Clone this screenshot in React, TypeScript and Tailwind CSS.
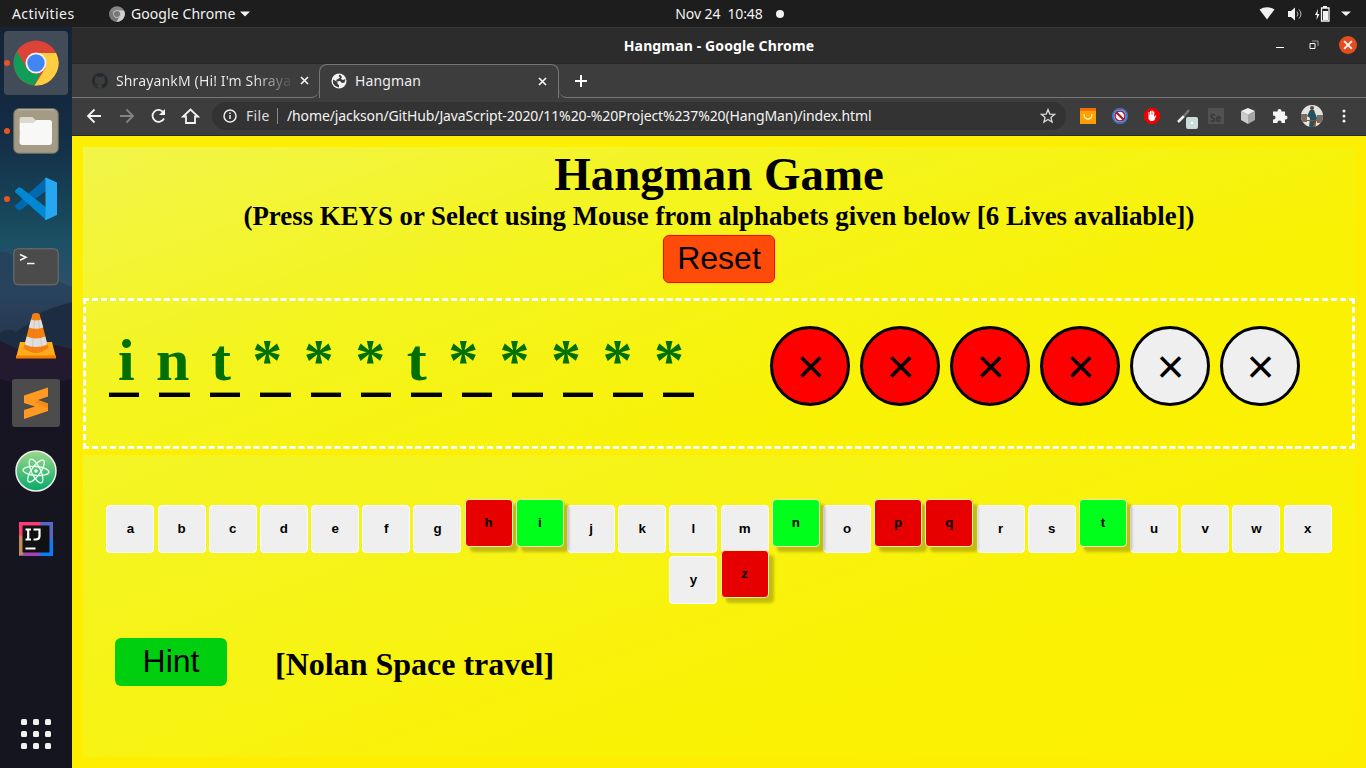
import React from 'react';

const revealed = ['i', 'n', 't', '*', '*', '*', 't', '*', '*', '*', '*', '*'];
const letters = 'abcdefghijklmnopqrstuvwxyz'.split('');
const wrong = 'hpqz';
const right = 'int';

function Chrome({ size = 46, grey = false }: { size?: number; grey?: boolean }) {
  return (
    <svg width={size} height={size} viewBox="0 0 46 46">
      <circle cx="23" cy="23" r="22.5" fill={grey ? '#858585' : '#db4437'} />
      <path d="M4 11.5 13.6 28A11 11 0 0 0 27.5 33L21.5 45.5A22.5 22.5 0 0 1 4 11.5Z" fill={grey ? '#777' : '#0f9d58'} />
      <path d="M23 13H43.1A22.5 22.5 0 0 1 21.5 45.5L32.2 28.5A11 11 0 0 0 23 13Z" fill={grey ? '#d0d0d0' : '#ffcd40'} />
      <circle cx="23" cy="23" r="10.5" fill={grey ? '#ccc' : '#f1f1f1'} />
      <circle cx="23" cy="23" r="8.7" fill={grey ? '#777' : '#4285f4'} />
    </svg>
  );
}

function FilesIcon() {
  return (
    <svg width="46" height="46" viewBox="0 0 46 46">
      <rect x=".8" y=".8" width="44.4" height="44.4" rx="5" fill="#a39b86" stroke="#7a7466" />
      <path d="M5 1.8h36" stroke="#c6c0b0" />
      <path d="M6.5 12V11q0-2 2-2h11l3 3H36v10H6.5z" fill="#ddd9cd" />
      <path d="M7 15h13l4-3h12.5q2.5 0 2.5 2.5V34q0 3-3 3H9.5q-3 0-3-3z" fill="#f8f8f6" />
    </svg>
  );
}

function CodeIcon() {
  return (
    <svg width="46" height="46" viewBox="0 0 46 46">
      <path d="M33 1.8 2.5 29.2Q1.5 30.5 2.5 31.5L5 33.8Q6.5 34.8 8 33.8L34 14Z" fill="#0069b0" />
      <path d="M8 11.8Q6.5 10.8 5 11.8L2.5 14Q1.5 15 2.5 16.5L33 44 34 32Z" fill="#0088d3" />
      <path d="M33 1.5 44 6.5V39L33 44Q31.5 44 32.5 41V4Q31.5 1.5 33 1.5Z" fill="#27a6f1" />
    </svg>
  );
}

function TerminalIcon() {
  return (
    <svg width="46" height="38" viewBox="0 0 46 38">
      <rect x=".8" y=".8" width="44.4" height="36" rx="4" fill="#4b4b4b" stroke="#727272" />
      <path d="m7 6.5 6 2.8-6 3M14 15.5h7.5" fill="none" stroke="#f4f4f4" strokeWidth="1.6" />
    </svg>
  );
}

function ConeIcon() {
  return (
    <svg width="42" height="48" viewBox="0 0 42 48">
      <path d="M5 31h32l4 16H1z" fill="#ffab1b" />
      <path d="M1 44.5h40v3H1z" fill="#f47c00" />
      <path d="M17.5 3q3.5-2 7 0l9 34q-12.5 10-25 0z" fill="#f58210" />
      <path d="M16 8.5q5 2 10 0l2.3 8q-7.3 2.5-14.5 0zM11.8 25.5q9.2 4 18.4 0l2.1 8q-11.3 5-22.6 0z" fill="#dedede" />
      <path d="m20 3-3 38M23 3l4 36" stroke="#b65c22" strokeOpacity=".16" />
    </svg>
  );
}

function SublimeIcon() {
  return (
    <svg width="48" height="48" viewBox="0 0 48 48">
      <rect width="48" height="48" rx="3" fill="#4c4c4c" />
      <path d="m12 16.5 24-8v9L26 21l10 3.5V32l-24 8v-9l11-3.5L12 24z" fill="#ff9921" />
      <path d="m26 21 10 3.5V29l-13-5z" fill="#e47d0b" fillOpacity=".45" />
    </svg>
  );
}

function AtomIcon() {
  return (
    <svg width="42" height="42" viewBox="0 0 42 42">
      <defs><linearGradient id="atom" x2="0" y2="1"><stop stopColor="#9bd88b" /><stop offset="1" stopColor="#08a96b" /></linearGradient></defs>
      <circle cx="21" cy="21" r="20" fill="url(#atom)" stroke="#eee" strokeWidth="1.5" />
      <g fill="none" stroke="#e9fff1" strokeWidth="1.3">
        <ellipse cx="21" cy="21" rx="13" ry="4.5" transform="rotate(5 21 21)" />
        <ellipse cx="21" cy="21" rx="13" ry="4.5" transform="rotate(65 21 21)" />
        <ellipse cx="21" cy="21" rx="13" ry="4.5" transform="rotate(125 21 21)" />
      </g>
      <circle cx="21" cy="21" r="1.7" fill="#fff" />
    </svg>
  );
}

function IntelliJIcon() {
  return (
    <svg width="36" height="36" viewBox="0 0 36 36">
      <path d="M1 1h34v34H1z" fill="#5866c6" />
      <path d="M1 1h22l-8 17L1 18z" fill="#fc3d72" />
      <path d="M1 14l8 4-4 16H1z" fill="#c58a56" />
      <path d="M3 35 12 28l12 7z" fill="#a442b1" />
      <path d="M35 18v17H22l5-12z" fill="#087cfa" />
      <path d="M4.5 4.5h27v27h-27z" fill="#111" />
      <path d="M7.5 8.5H13M10.2 8.5v10M7.5 18.5H13M15.5 8.5h6V15q0 3.5-4 3.500h-2" fill="none" stroke="#fff" strokeWidth="2.2" />
      <path d="M7.5 26.5h10v2h-10z" fill="#fff" />
    </svg>
  );
}

function DockItem({ children, running = false, active = false }: { children: React.ReactNode; running?: boolean; active?: boolean }) {
  return (
    <div className={`relative flex h-16 w-16 shrink-0 items-center justify-center rounded ${active ? 'bg-[#424c59]' : ''}`}>
      {running && <span className="absolute top-[29px] left-0 h-1.5 w-1.5 rounded-full bg-[#e95420]" />}
      {children}
    </div>
  );
}

function Dock() {
  return (
    <aside className="relative flex w-[72px] shrink-0 flex-col items-center gap-1 bg-[linear-gradient(180deg,#152334_0%,#142c44_14%,#17465a_25%,#1c5064_29%,#30506a_36%,#2b3c56_40%,#181522_53%,#151520_65%)] pt-1">
      <svg width="72" height="741" viewBox="0 0 72 741" className="absolute inset-0">
        <path d="M0 225q6-2 12 3l12 8 20 12 28 12v60H0z" fill="#273a55" fillOpacity=".6" />
        <path d="M0 306q8-6 16-1l12-8 14-12 10-4 20-6v80H0z" fill="#1c2d42" />
        <path d="M0 314l22 10 18 2 14-8 18 4v70H0z" fill="#241a30" />
        <path d="M0 352l30 8 42-8v50H0z" fill="#171523" />
      </svg>
      <DockItem active running><Chrome /></DockItem>
      <DockItem running><FilesIcon /></DockItem>
      <DockItem running><CodeIcon /></DockItem>
      <DockItem><TerminalIcon /></DockItem>
      <DockItem><ConeIcon /></DockItem>
      <DockItem><SublimeIcon /></DockItem>
      <DockItem><AtomIcon /></DockItem>
      <DockItem><IntelliJIcon /></DockItem>
      <div className="mt-auto mb-[19px] grid grid-cols-3 gap-1.5">
        {Array.from({ length: 9 }, (_, i) => <i key={i} className="h-1.5 w-1.5 rounded-[1.5px] bg-[#f0f0ed]" />)}
      </div>
    </aside>
  );
}

function SystemBar() {
  return (
    <header className="grid h-[27px] shrink-0 grid-cols-3 items-center bg-[#1d1d1d] text-[14px] leading-[26px] text-[#f2f2f2]">
      <div className="flex items-center pl-3">
        <span className="w-[97px] tracking-[0.42px]">Activities</span>
        <Chrome size={16} grey />
        <span className="ml-1.5 w-[105px] tracking-[0.08px]">Google Chrome</span>
        <svg width="11" height="6" viewBox="0 0 11 6" className="ml-1"><path d="M0 .5h10L5 5.5z" fill="#f2f2f2" /></svg>
      </div>
      <div className="flex items-center pl-[220px]">
        <span className="w-[89px] whitespace-pre tracking-[-0.1px]">Nov 24  10:48</span>
        <i className="ml-3 h-2 w-2 rounded-full bg-[#f2f2f2]" />
      </div>
      <div className="flex items-center justify-end gap-3 pr-[15px]">
        <svg width="16" height="13" viewBox="0 0 16 13"><path d="M.5 2.5Q8-2 15.5 2.500L8 12.500z" fill="#f2f2f2" /></svg>
        <svg width="16" height="14" viewBox="0 0 16 14"><path d="M1 4h3l4-3.500v13L4 10H1z" fill="#f2f2f2" /><path d="M10 4.500q2 2.500 0 5M12 2.500q4 4.500 0 9" fill="none" stroke="#bbb" /></svg>
        <svg width="15" height="16" viewBox="0 0 15 16"><path d="M3 3 0 9h2l-.5 5L4.500 8h-2zM8 0h4v2H8zM8 5h5v9H8z" fill="#f2f2f2" /><path d="M6.500 2h7.500v13H6.500z" fill="none" stroke="#f2f2f2" strokeWidth="1.3" /></svg>
        <svg width="10" height="6" viewBox="0 0 10 6" className="-ml-px"><path d="M0 .5h10L5 5z" fill="#f2f2f2" /></svg>
      </div>
    </header>
  );
}

function Close({ size = 9 }: { size?: number }) {
  return <svg width={size} height={size} viewBox="0 0 9 9"><path d="m1 1 7 7M8 1 1 8" stroke="#f4f4f4" strokeWidth="1.7" /></svg>;
}

function BrowserHeader() {
  return (
    <>
      <div className="relative flex h-9 shrink-0 items-center justify-center border-t border-[#393939] bg-[#2c2c2c] text-[14px] font-bold text-white">
        <span className="tracking-[0.13px]">Hangman - Google Chrome</span>
        <div className="absolute top-[8px] right-[9px] flex h-[18px] items-center">
          <i className="mt-[5px] mr-[25px] h-px w-2 bg-white" />
          <svg width="10" height="10" viewBox="0 0 10 10" className="mr-[20px]"><path d="M1 3.5h5v5H1z" fill="none" stroke="#fff" /><path d="M3 1h6v5" fill="none" stroke="#999" /></svg>
          <span className="flex h-[18px] w-[18px] items-center justify-center rounded-full bg-[#e44d1c]"><Close size={10} /></span>
        </div>
      </div>
      <div className="flex h-[35px] shrink-0 items-stretch border-t border-[#272727] bg-[#3d3d3d] text-[14px] text-[#eee]">
        <div className="flex w-[247px] items-center rounded-br-lg border-b border-[#777] pl-5">
          <svg width="16" height="16" viewBox="0 0 16 16"><path fill="#24292e" d="M8 0a8 8 0 0 0-2.500 15.600c.4.100.5-.2.500-.4v-1.500c-2.200.5-2.700-1-2.700-1-.4-.9-.9-1.200-.9-1.200-.7-.5.1-.5.1-.5.800.1 1.200.8 1.200.8.700 1.200 1.900.9 2.300.7.100-.5.300-.9.500-1.100-1.800-.2-3.700-.9-3.700-4 0-.9.300-1.600.8-2.200-.1-.2-.4-1 .1-2.100 0 0 .7-.2 2.200.8a7.600 7.600 0 0 1 4 0c1.500-1 2.200-.8 2.200-.8.500 1.100.2 1.900.1 2.100.5.600.8 1.300.8 2.200 0 3.100-1.900 3.800-3.700 4 .3.300.6.800.6 1.500v2.300c0 .2.100.5.600.4A8 8 0 0 0 8 0Z" /></svg>
          <span className="ml-2 w-[175px] overflow-hidden bg-[linear-gradient(90deg,#eee_78%,#4a4a4a_100%)] bg-clip-text pb-px tracking-[0.14px] whitespace-nowrap text-transparent">ShrayankM (Hi! I'm Shraya</span>
          <span className="ml-[9px]"><Close /></span>
        </div>
        <div className="flex w-[240px] items-center rounded-t-lg border-x border-t border-[#777] pb-px pl-[11px]">
          <svg width="16" height="16" viewBox="0 0 16 16"><circle cx="8" cy="8" r="7.5" fill="#f5f5f5" /><path d="M2 6.5 5 8l1.500 1v2L8 12v2.500Q3.500 13.500 2 10zM9 1.500 7.500 3 9 4.500 7 6 5 7l1 1.500 3-.5 2 2 2.500-.5L14.500 6 12 7l-2-1 1-2z" fill="#3c3c3c" /></svg>
          <span className="ml-2 flex-1 pb-px tracking-[0.15px]">Hangman</span>
          <span className="mr-[11px]"><Close /></span>
        </div>
        <div className="flex flex-1 items-center rounded-bl-lg border-b border-[#777] pl-[15px]">
          <svg width="14" height="14" viewBox="0 0 14 14"><path d="M7 1v12M1 7h12" stroke="#fff" strokeWidth="2" /></svg>
        </div>
      </div>
    </>
  );
}

function Toolbar() {
  return (
    <div className="flex h-[38px] shrink-0 items-center border-b border-[#292929] bg-[#3d3d3d] pb-px text-[14px] text-[#f3f3f3]">
      <svg width="120" height="24" viewBox="0 0 120 24" className="mx-2.5 shrink-0" fill="none" stroke="#f3f3f3" strokeWidth="1.8">
        <path d="M19 12H6m6.500-6.500L6 12l6.500 6.500" /><path d="M38 12h13M44.500 5.500 51 12l-6.500 6.500" stroke="#858585" />
        <path d="M81.500 8.500a6 6 0 1 0 .5 6" /><path d="M83 5v6h-6z" fill="#f3f3f3" stroke="none" />
        <path d="M101 12.500h3V19h9v-6.500h3L108.500 5.500z" />
      </svg>
      <div className="flex h-7 w-[854px] shrink-0 items-center rounded-full bg-[#333] pl-[11px]">
        <svg width="14" height="14" viewBox="0 0 14 14" fill="none" stroke="#eee" strokeWidth="1.5"><circle cx="7" cy="7" r="6" /><path d="M7 6v4M7 3.500V5" /></svg>
        <span className="ml-[9px] w-[31px] pb-0.5 tracking-[0.3px] text-[#ddd]">File</span><i className="mr-[9px] h-4 w-px bg-[#888]" />
        <span className="flex-1 pb-0.5 tracking-[-0.12px] whitespace-nowrap">/home/jackson/GitHub/JavaScript-2020/11%20-%20Project%237%20(HangMan)/index.html</span>
        <svg width="16" height="16" viewBox="0 0 16 16" className="mr-2.5"><path d="m8 1.500 1.800 4.600 4.700.3-3.600 3 1.200 4.700L8 11.500l-4.100 2.600 1.200-4.700-3.600-3 4.700-.3z" fill="none" stroke="#ddd" strokeWidth="1.3" /></svg>
      </div>
      <div className="ml-3.5 flex items-center gap-4">
        <svg width="16" height="16" viewBox="0 0 16 16"><path d="M0 0h16v16H0z" fill="#ff9f00" /><path d="M0 0h16v3H0z" fill="#f36f0a" /><path d="M4 6q0 5 4 5t4-5" fill="none" stroke="#fff0c0" strokeWidth="1.3" /></svg>
        <svg width="16" height="16" viewBox="0 0 16 16"><circle cx="8" cy="8" r="7" fill="#f5eeee" stroke="#397bce" strokeWidth="2" /><circle cx="8" cy="8" r="5" fill="none" stroke="#951c35" strokeWidth="1.5" /><path d="m4 4 8 8" stroke="#951c35" strokeWidth="2" /></svg>
        <svg width="16" height="16" viewBox="0 0 16 16"><path d="M5 0h6l5 5v6l-5 5H5l-5-5V5z" fill="#f20000" /><path d="M4.500 7v-3h1v3h.5V3h1.200v4h.3V2.500h1.200V7H9V3.500h1.200V9l1-1.500h1L10.500 12 9 13H6.500L4.500 11z" fill="#fff" /></svg>
        <svg width="22" height="22" viewBox="0 0 22 22" className="-mr-1.5 mt-1"><path d="m2 15 6-6" stroke="#eee" strokeWidth="2.5" /><path d="m8 9 5-6" stroke="#777" strokeWidth="2.5" /><rect x="10" y="10" width="12" height="12" rx="2" fill="#cbdcda" /><path d="M15 15h2v2h-2z" fill="#fff" /></svg>
        <span className="flex h-4 w-4 items-end bg-[#515151] pl-0.5 text-[10px] leading-[11px] font-bold text-[#383838]">Se</span>
        <svg width="16" height="16" viewBox="0 0 16 16"><path d="m8 0 7 3-7 4-7-4z" fill="#eee" /><path d="M1 3 8 7v9l-7-4z" fill="#ccc" /><path d="m8 7 7-4v9l-7 4z" fill="#a7a7a7" /></svg>
        <svg width="16" height="16" viewBox="0 0 16 16"><path d="M1 3.500h4.500V3a2 2 0 0 1 4 0v.5H13v4h.5a2 2 0 0 1 0 4H13V15H9.500v-.5a2 2 0 0 0-4 0v.5H1v-3.500h.5a2 2 0 0 0 0-4H1z" fill="#f5f5f5" /></svg>
        <svg width="22" height="22" viewBox="0 0 22 22" className="-mx-[3px]"><defs><clipPath id="avatar"><circle cx="11" cy="11" r="11" /></clipPath></defs><g clipPath="url(#avatar)"><path d="M0 0h22v22H0z" fill="#e4e3de" /><path d="M0 9h6v8H0zM16 10h6v8h-6z" fill="#766d63" /><path d="m9 5 4 0 3 8-2 9H8l1-9-3-2z" fill="#235262" /><circle cx="11" cy="3" r="2" fill="#60483b" /><path d="M5 15h12v1H5zM14 16l1 6-3-1z" fill="#a24d1d" /></g></svg>
        <svg width="4" height="16" viewBox="0 0 4 16" className="ml-1.5"><g fill="#f3f3f3"><circle cx="2" cy="3" r="1.5" /><circle cx="2" cy="8" r="1.5" /><circle cx="2" cy="13" r="1.5" /></g></svg>
      </div>
    </div>
  );
}

function Game() {
  return (
    <main className="flex-1 overflow-hidden bg-[#feef00] px-[11px] pt-[11px] font-['Liberation_Serif',serif] text-black">
      <div className="h-[302px] bg-[linear-gradient(160deg,#f1f549_0%,#f4f41e_35%,#f9f205_70%,#fcf000_100%)]">
        <section className="flex h-[151px] flex-col items-center">
          <h1 className="text-[46.9px] leading-[55px] font-bold">Hangman Game</h1>
          <h2 className="-mt-px text-[26.83px] leading-[31px] font-bold">(Press KEYS or Select using Mouse from alphabets given below [6 Lives avaliable])</h2>
          <button className="mt-[3px] h-12 w-28 rounded-md border border-[#ff0000] bg-[#ff4b0a] pb-0.5 font-['Liberation_Sans',sans-serif] text-[32px] leading-8">Reset</button>
        </section>
        <section className="flex h-[151px] border-[3px] border-dashed border-white">
          <div className="w-[684px] pt-[25px]">
            <div className="h-[67px] pl-[32px] text-[60px] leading-[68px] font-bold whitespace-pre text-[#007000] [word-spacing:6.45px]">{revealed.join(' ')}</div>
            <div className="flex gap-5 pl-[23px]">{revealed.map((_, i) => <i key={i} className="h-1 w-[30.4px] bg-black shadow-[0_-1px_0_rgba(0,0,0,0.4)]" />)}</div>
          </div>
          <div className="mt-[25px] flex gap-2.5">
            {[0, 1, 2, 3, 4, 5].map(i => <button key={i} className={`flex h-20 w-20 items-center justify-center rounded-full border-[3px] border-black pt-0.5 pl-px font-['Liberation_Sans',sans-serif] text-[48px] leading-none ${i < 4 ? 'bg-[#ff0000]' : 'bg-[#efefef]'}`}>×</button>)}
          </div>
        </section>
      </div>
      <section className="mt-1.5 h-[302px] bg-[linear-gradient(160deg,#f4f526_0%,#f6f318_28%,#faf204_65%,#fcf000_100%)] pt-[50px]">
        <div className="flex h-[133px] flex-wrap content-start justify-center gap-x-[3.2px] gap-y-[3px] px-5 font-['Liberation_Sans',sans-serif]">
          {letters.map(letter => {
            const used = wrong.includes(letter) || right.includes(letter);
            return <button key={letter} className={`h-12 w-12 rounded border text-[13.333px] font-bold ${used ? '-translate-y-1.5 border-[#f4efb4] shadow-[5px_5px_3px_rgba(0,0,0,0.22)]' : 'border-white'} ${right.includes(letter) ? 'bg-[#00ff1a]' : wrong.includes(letter) ? 'bg-[#e60000]' : 'bg-[#efefef]'}`}>{letter}</button>;
          })}
        </div>
        <div className="flex items-center pl-8">
          <button className="h-12 w-28 rounded-md bg-[#00cf10] pb-0.5 font-['Liberation_Sans',sans-serif] text-[32px] leading-8">Hint</button>
          <span className="ml-[48px] pt-1 text-[32px] leading-10 font-bold">[Nolan Space travel]</span>
        </div>
      </section>
    </main>
  );
}

export default function App() {
  return (
    <div className="flex h-screen w-screen flex-col overflow-hidden bg-[#151520] font-['Noto_Sans',sans-serif]">
      <SystemBar />
      <div className="flex min-h-0 flex-1"><Dock /><div className="flex min-w-0 flex-1 flex-col"><BrowserHeader /><Toolbar /><Game /></div></div>
    </div>
  );
}
